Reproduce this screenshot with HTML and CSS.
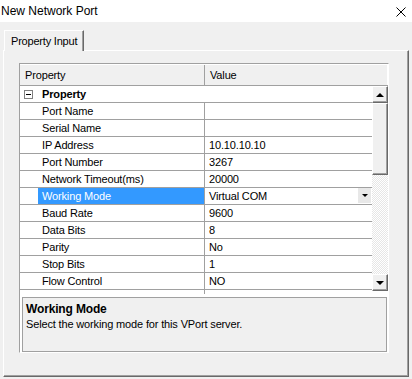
FILE: index.html
```html
<!DOCTYPE html>
<html lang="en">
<head>
    <meta charset="UTF-8">
    <title>New Network Port</title>
    <link rel="stylesheet" href="styles.css">
</head>
<body>
    <div class="titlebar">
        <span class="title">New Network Port</span>
        <svg class="close" width="10" height="10" viewBox="0 0 10 10">
            <path d="M0.5 0.5 L9.5 9.5 M9.5 0.5 L0.5 9.5" stroke="#000" stroke-width="1" fill="none"/>
        </svg>
    </div>

    <div class="tabs">
        <div class="tab">Property Input</div>
    </div>

    <div class="page">
        <div class="grid">
            <div class="grid-header">
                <div class="head-name">Property</div>
                <div class="head-value">Value</div>
            </div>

            <div class="grid-body">
                <div class="rows">
                    <div class="row category">
                        <span class="toggle"></span>
                        <span class="cat-label">Property</span>
                    </div>
                    <div class="row"><div class="name">Port Name</div><div class="value"></div></div>
                    <div class="row"><div class="name">Serial Name</div><div class="value"></div></div>
                    <div class="row"><div class="name">IP Address</div><div class="value">10.10.10.10</div></div>
                    <div class="row"><div class="name">Port Number</div><div class="value">3267</div></div>
                    <div class="row"><div class="name">Network Timeout(ms)</div><div class="value">20000</div></div>
                    <div class="row selected">
                        <div class="name">Working Mode</div>
                        <div class="value">Virtual COM<span class="combo-btn"><span class="tri-sm"></span></span></div>
                    </div>
                    <div class="row"><div class="name">Baud Rate</div><div class="value">9600</div></div>
                    <div class="row"><div class="name">Data Bits</div><div class="value">8</div></div>
                    <div class="row"><div class="name">Parity</div><div class="value">No</div></div>
                    <div class="row"><div class="name">Stop Bits</div><div class="value">1</div></div>
                    <div class="row"><div class="name">Flow Control</div><div class="value">NO</div></div>
                    <div class="row stub"><div class="name"></div></div>
                </div>

                <div class="scrollbar">
                    <div class="sb-btn"><span class="tri up"></span></div>
                    <div class="sb-thumb"></div>
                    <div class="sb-track"></div>
                    <div class="sb-btn"><span class="tri down"></span></div>
                </div>
            </div>

            <div class="desc">
                <div class="desc-title">Working Mode</div>
                <div class="desc-text">Select the working mode for this VPort server.</div>
            </div>
        </div>
    </div>
</body>
</html>
```

FILE: styles.css
```css
* {
    box-sizing: border-box;
}

body {
    margin: 0;
    width: 412px;
    height: 379px;
    overflow: hidden;
    background: #f0f0f0;
    font-family: 'Liberation Sans', Arial, sans-serif;
    font-size: 11px;
    color: #000;
}

/* title bar */

.titlebar {
    height: 22px;
    background: #fff;
    display: flex;
    align-items: center;
    justify-content: space-between;
    padding: 0 6px 0 1px;
}

.title {
    font-size: 12px;
}

.close {
    display: block;
    margin-top: 1px;
}

/* tab strip */

.tabs {
    height: 28px;
    display: flex;
    align-items: flex-end;
    padding-left: 4px;
}

.tab {
    width: 80px;
    height: 21px;
    margin-bottom: -1px;
    position: relative;
    z-index: 1;
    background: #f0f0f0;
    border-top: 1px solid #fff;
    border-left: 1px solid #fff;
    border-right: 1px solid #696969;
    box-shadow: inset -1px 0 0 #a0a0a0;
    padding: 3px 0 0 6px;
    line-height: 14px;
    letter-spacing: -0.2px;
}

.page {
    height: 327px;
    margin: 0 3px;
    border-top: 1px solid #fff;
    border-left: 1px solid #fff;
    border-right: 1px solid #696969;
    border-bottom: 1px solid #696969;
    box-shadow: inset -1px -1px 0 #a0a0a0;
    padding: 12px 0 0 15px;
}

/* property grid */

.grid {
    width: 370px;
    height: 290px;
    background: #fff;
    border: 1px solid;
    border-color: #a0a0a0 #fff #fff #a0a0a0;
    display: flex;
    flex-direction: column;
    letter-spacing: -0.15px;
}

.grid-header {
    height: 22px;
    display: flex;
    background: #f0f0f0;
    border-top: 1px solid #fff;
    border-bottom: 1px solid #a0a0a0;
    line-height: 20px;
}

.head-name {
    width: 185px;
    padding-left: 5px;
    border-right: 1px solid #a0a0a0;
}

.head-value {
    flex: 1;
    padding-left: 5px;
    border-right: 1px solid #fff;
}

.grid-body {
    height: 208px;
    display: flex;
    align-items: flex-start;
}

.rows {
    width: 352px;
    height: 208px;
}

.row {
    height: 17px;
    display: flex;
    border-bottom: 1px solid #a0a0a0;
    line-height: 16px;
}

.row .name {
    width: 167px;
    margin-left: 18px;
    padding-left: 4px;
    border-right: 1px solid #a0a0a0;
    white-space: nowrap;
}

.row .value {
    flex: 1;
    padding-left: 4px;
    display: flex;
    justify-content: space-between;
}

.row.selected .name {
    background: #3399ff;
    color: #fff;
}

.row.stub {
    height: 4px;
    border-bottom: none;
}

.category {
    align-items: center;
}

.toggle {
    width: 9px;
    height: 9px;
    margin: 0 9px 0 4px;
    border: 1px solid #808080;
    position: relative;
}

.toggle::after {
    content: "";
    position: absolute;
    left: 1px;
    right: 1px;
    top: 3px;
    height: 1px;
    background: #000;
}

.cat-label {
    font-weight: bold;
}

.combo-btn {
    width: 13px;
    height: 15px;
    margin-right: 1px;
    background: #e8e8e8;
    display: flex;
    align-items: center;
    justify-content: center;
}

.tri-sm {
    width: 0;
    height: 0;
    border-left: 3px solid transparent;
    border-right: 3px solid transparent;
    border-top: 3px solid #000;
}

/* scrollbar */

.scrollbar {
    width: 16px;
    height: 205px;
    display: flex;
    flex-direction: column;
}

.sb-btn,
.sb-thumb {
    background: #f0f0f0;
    border-top: 1px solid #fff;
    border-left: 1px solid #fff;
    border-right: 1px solid #696969;
    border-bottom: 1px solid #696969;
    box-shadow: inset -1px -1px 0 #a0a0a0;
}

.sb-btn {
    height: 17px;
    display: flex;
    align-items: center;
    justify-content: center;
}

.sb-thumb {
    height: 72px;
}

.sb-track {
    flex: 1;
    background: repeating-conic-gradient(#fff 0 25%, #e6e6e6 0 50%) 0 0 / 2px 2px;
}

.tri {
    width: 0;
    height: 0;
    border-left: 4px solid transparent;
    border-right: 4px solid transparent;
}

.tri.up {
    border-bottom: 4px solid #000;
}

.tri.down {
    border-top: 4px solid #000;
}

/* description pane */

.desc {
    height: 55px;
    margin: 3px 1px 0 2px;
    background: #f0f0f0;
    border: 1px solid #a0a0a0;
    padding: 4px 0 0 3px;
    line-height: 15px;
}

.desc-title {
    font-weight: bold;
    font-size: 12px;
}
```
